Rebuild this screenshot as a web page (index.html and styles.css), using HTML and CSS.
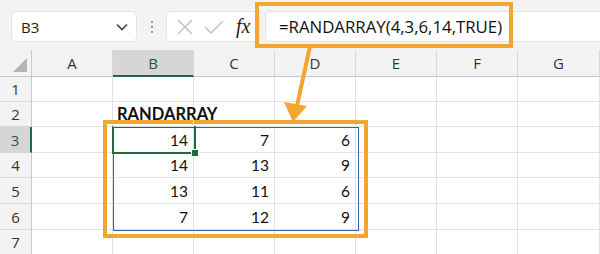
FILE: index.html
```html
<!DOCTYPE html>
<html>
<head>
<meta charset="utf-8">
<link rel="stylesheet" href="styles.css">
</head>
<body>
<div class="app">
  <div class="toolbar">
    <div class="namebox">
      <span class="ref">B3</span>
      <svg class="chev" width="14" height="10" viewBox="0 0 14 10"><path d="M2 2.5 L7 7.5 L12 2.5" fill="none" stroke="#444" stroke-width="1.6"/></svg>
    </div>
    <div class="dots"><span></span><span></span><span></span></div>
    <div class="fxbox">
      <svg width="16" height="16" viewBox="0 0 16 16"><path d="M1 1 L15 15 M15 1 L1 15" stroke="#bdbdbd" stroke-width="1.3" fill="none"/></svg>
      <svg width="20" height="16" viewBox="0 0 20 16"><path d="M1 8 L7 14 L19 2" stroke="#bdbdbd" stroke-width="1.3" fill="none"/></svg>
      <span class="fx">fx</span>
    </div>
    <div class="formula">=RANDARRAY(4,3,6,14,TRUE)</div>
  </div>
  <div class="sheet">
    <div class="corner"><span class="tri"></span></div>
    <div class="ch">A</div><div class="ch sel">B</div><div class="ch">C</div><div class="ch">D</div><div class="ch">E</div><div class="ch">F</div><div class="ch">G</div>

    <div class="rh">1</div><div class="c"></div><div class="c"></div><div class="c"></div><div class="c"></div><div class="c"></div><div class="c"></div><div class="c"></div>
    <div class="rh">2</div><div class="c"></div><div class="c title">RANDARRAY</div><div class="c"></div><div class="c"></div><div class="c"></div><div class="c"></div><div class="c"></div>
    <div class="rh sel">3</div><div class="c"></div><div class="c n">14</div><div class="c n">7</div><div class="c n">6</div><div class="c"></div><div class="c"></div><div class="c"></div>
    <div class="rh">4</div><div class="c"></div><div class="c n">14</div><div class="c n">13</div><div class="c n">9</div><div class="c"></div><div class="c"></div><div class="c"></div>
    <div class="rh">5</div><div class="c"></div><div class="c n">13</div><div class="c n">11</div><div class="c n">6</div><div class="c"></div><div class="c"></div><div class="c"></div>
    <div class="rh">6</div><div class="c"></div><div class="c n">7</div><div class="c n">12</div><div class="c n">9</div><div class="c"></div><div class="c"></div><div class="c"></div>
    <div class="rh">7</div><div class="c"></div><div class="c"></div><div class="c"></div><div class="c"></div><div class="c"></div><div class="c"></div><div class="c"></div>
  </div>

  <div class="range"></div>
  <div class="active"><span class="handle"></span></div>
  <div class="hl hl-formula"></div>
  <div class="hl hl-data"></div>
  <svg class="arrow" width="600" height="254" viewBox="0 0 600 254">
    <path d="M310 46 L297 106" stroke="#f2a630" stroke-width="4" fill="none"/>
    <path d="M284 102 L307 106 L293 122 Z" fill="#f2a630"/>
  </svg>
</div>
</body>
</html>
```
FILE: styles.css
```css
* { box-sizing: border-box; }
html, body { margin: 0; padding: 0; }
body { width: 600px; height: 254px; overflow: hidden; background: #fff; font-family: "Open Sans", "Noto Sans", sans-serif; }
.app { position: relative; width: 600px; height: 254px; overflow: hidden; }

.toolbar { height: 50px; background: #f3f3f3; display: flex; align-items: flex-start; padding-top: 11px; padding-left: 11px; }
.namebox { width: 126px; height: 31px; background: #fff; border: 1px solid #e3e3e3; border-radius: 5px; display: flex; align-items: center; justify-content: space-between; padding: 0 7px 0 9px; }
.ref { font-size: 15px; color: #222; }
.dots { width: 29px; height: 31px; display: flex; flex-direction: column; align-items: center; justify-content: center; gap: 3px; }
.dots span { width: 2px; height: 2px; background: #777; border-radius: 1px; }
.fxbox { width: 94px; height: 31px; background: #fff; border: 1px solid #e3e3e3; border-radius: 5px; display: flex; align-items: center; padding-left: 10px; gap: 11px; }
.fx { font-family: "Liberation Serif", serif; font-style: italic; font-size: 20px; color: #222; margin-left: 1px; }
.formula { flex: 1; height: 31px; margin-left: 5px; background: #fff; border: 1px solid #e3e3e3; border-right: none; border-radius: 5px 0 0 5px; display: flex; align-items: center; padding-left: 13px; font-family: "Open Sans", sans-serif; font-size: 16.8px; color: #111; white-space: nowrap; }

.sheet { display: grid; grid-template-columns: 32px repeat(6, 81px) 82px; grid-template-rows: 27px 25px 25px 26px 25px 26px 26px 25px; }
.corner { background: #f3f3f3; border-right: 1px solid #c8c8c8; border-bottom: 1px solid #c8c8c8; position: relative; }
.tri { position: absolute; right: 4px; bottom: 4px; width: 0; height: 0; border-left: 14px solid transparent; border-bottom: 14px solid #b5b5b5; }
.ch { background: #f3f3f3; border-right: 1px solid #d8d8d8; border-bottom: 1px solid #c8c8c8; display: flex; align-items: center; justify-content: center; font-size: 15px; color: #333; }
.ch.sel { background: #d6d6d6; border-bottom: 2px solid #1e6b41; color: #1e5a36; }
.rh { background: #f3f3f3; border-right: 1px solid #c8c8c8; border-bottom: 1px solid #d8d8d8; display: flex; align-items: center; justify-content: center; font-size: 15px; color: #333; }
.rh.sel { background: #d6d6d6; border-right: 2px solid #1e6b41; color: #1e5a36; }
.c { border-right: 1px solid #e1e1e1; border-bottom: 1px solid #e1e1e1; font-family: "Lato", sans-serif; font-size: 15.5px; color: #111; display: flex; align-items: flex-end; padding: 0 5px 3px 4px; white-space: nowrap; overflow: visible; }
.c.n { justify-content: flex-end; }
.c.title { font-weight: bold; font-size: 16.5px; padding-bottom: 2px; position: relative; z-index: 1; }

.range { position: absolute; left: 113px; top: 127px; width: 246px; height: 104px; border: 1px solid #3a62a8; }
.active { position: absolute; left: 112px; top: 126px; width: 84px; height: 28px; border: 2px solid #1e6b41; }
.handle { position: absolute; right: -5px; bottom: -5px; width: 8px; height: 8px; background: #1e6b41; border: 1px solid #fff; }
.hl { position: absolute; border: 4px solid #f2a630; }
.hl-formula { left: 255px; top: 2px; width: 258px; height: 46px; }
.hl-data { left: 103px; top: 120px; width: 265px; height: 118px; }
.arrow { position: absolute; left: 0; top: 0; }
```
